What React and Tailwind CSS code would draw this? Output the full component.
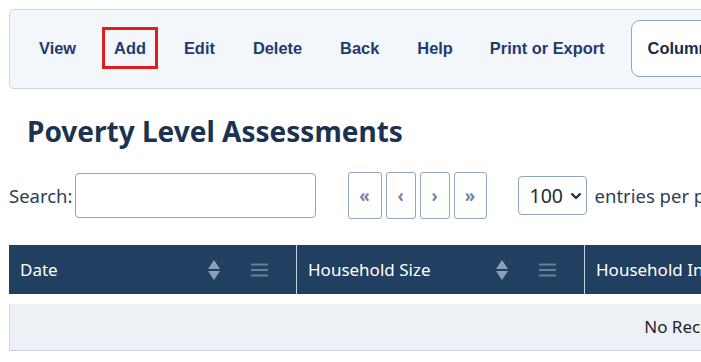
import React from "react";

function SortIcon() {
  return (
    <svg width="14" height="22" viewBox="0 0 14 22" className="shrink-0">
      <path d="M7 1 L13 10 L1 10 Z" fill="#8c9fb8" />
      <path d="M7 21 L13 12 L1 12 Z" fill="#8c9fb8" />
    </svg>
  );
}

function MenuIcon() {
  return (
    <svg width="17" height="14" viewBox="0 0 17 14" className="shrink-0">
      <rect x="0" y="0.5" width="17" height="2" fill="#6b7f97" />
      <rect x="0" y="6" width="17" height="2" fill="#6b7f97" />
      <rect x="0" y="11.5" width="17" height="2" fill="#6b7f97" />
    </svg>
  );
}

function HeaderCell({ label, last }) {
  return (
    <div
      className={
        "w-[288px] shrink-0 h-full flex items-center pl-[11px] pr-[28px] " +
        (last ? "" : "border-r border-[#c6d2e2]")
      }
    >
      <span className="text-white text-[17px] flex-1 whitespace-nowrap">{label}</span>
      <SortIcon />
      <span className="w-[30px]" />
      <MenuIcon />
    </div>
  );
}

export default function App() {
  const items = ["View", "Add", "Edit", "Delete", "Back", "Help", "Print or Export"];
  return (
    <div className="w-[701px] h-[362px] overflow-hidden bg-white relative">
      <div className="w-[1500px] pt-[9px] pl-[9px]">
        {/* Toolbar */}
        <div
          className="h-[80px] flex items-center px-[10px] bg-[#f3f6fb] border border-[#cbd6e6] rounded-[5px]"
          style={{ fontFamily: '"Liberation Sans", Arial, sans-serif' }}
        >
          {items.map((it) => (
            <div
              key={it}
              className={
                "h-[42px] flex items-center text-[16.4px] font-bold text-[#1f3b70] whitespace-nowrap -translate-y-[1px] " +
                (it === "Add"
                  ? "mx-[7px] border-[3px] border-[#e01e1e] px-[9px]"
                  : it === "Print or Export"
                  ? "mx-[7px] px-[11px]"
                  : "mx-[8px] px-[11px]")
              }
            >
              {it}
            </div>
          ))}
          <div className="ml-[8px] h-[57px] px-[16px] flex items-center bg-white border border-[#8fa5c3] rounded-[9px] text-[16.4px] font-bold text-[#152c4a] -translate-y-[1px]">
            Columns
          </div>
        </div>

        <div style={{ fontFamily: '"Noto Sans", "Open Sans", sans-serif' }}>
          {/* Heading */}
          <h1 className="pl-[18px] pt-[23px] text-[28px] leading-[38px] font-bold text-[#1b3350]">
            Poverty Level Assessments
          </h1>

          {/* Controls */}
          <div className="mt-[22px] flex items-center h-[47px]">
            <span className="text-[18.5px] text-[#2b3f56] mr-[2px]">Search:</span>
            <div className="w-[241px] h-[45px] bg-white border border-[#8fa5c3] rounded-[4px]" />
            <div className="ml-[32px] flex gap-[4px] h-[47px]">
              {[
                ["«", 34],
                ["‹", 30],
                ["›", 30],
                ["»", 33],
              ].map(([g, w]) => (
                <div
                  key={g}
                  style={{ width: w }}
                  className="h-[47px] flex items-center justify-center border border-[#91a6c4] rounded-[3px] text-[#6c86aa] text-[17px] font-bold"
                >
                  {g}
                </div>
              ))}
            </div>
            <div className="ml-[31px] w-[69px] h-[39px] border border-[#8fa5c3] rounded-[4px] flex items-center pl-[11px] gap-[7px]">
              <span className="text-[19.5px] text-[#1e2a38]">100</span>
              <svg width="12" height="8" viewBox="0 0 12 8">
                <path d="M1.5 1.5 L6 6 L10.5 1.5" stroke="#1e2a38" strokeWidth="2.2" fill="none" />
              </svg>
            </div>
            <span className="ml-[8px] text-[18.5px] text-[#2b3f56] whitespace-nowrap">entries per page</span>
          </div>

          {/* Table */}
          <div className="mt-[26px] w-[1416px]">
            <div className="h-[49px] bg-[#213f61] flex">
              <HeaderCell label="Date" />
              <HeaderCell label="Household Size" />
              <HeaderCell label="Household Income" />
              <HeaderCell label="Poverty Level" />
              <HeaderCell label="Status" last />
            </div>
            <div className="mt-[10px] h-[47px] bg-[#edf0f5] border-l border-b border-[#c8d5e7] flex items-center justify-center">
              <span className="text-[17px] text-[#1f2328]">No Records Found</span>
            </div>
          </div>
        </div>
      </div>
    </div>
  );
}
